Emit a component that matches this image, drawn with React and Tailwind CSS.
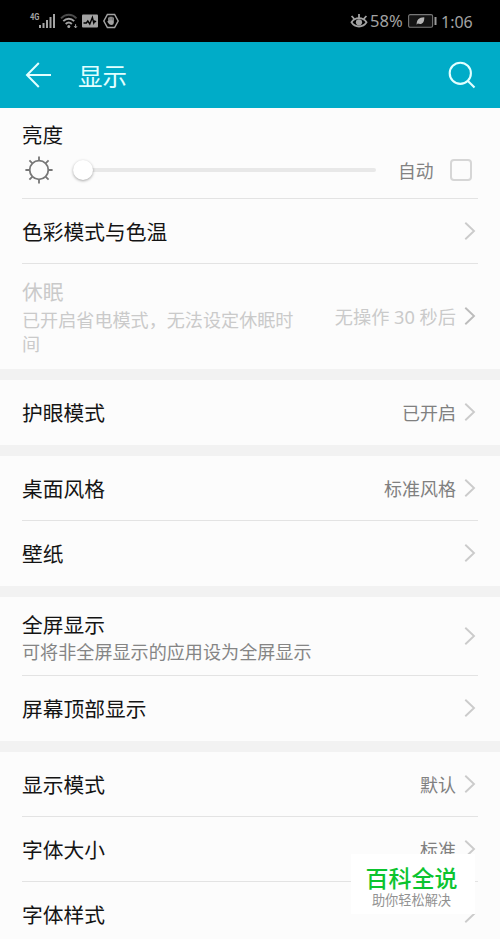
function StatusBar() {
  return (
    <div className="h-[42px] bg-black flex items-center justify-between pl-[29px] pr-[27px] text-[#a3a3a3]">
      <div className="flex items-center">
        <svg width="27" height="18" viewBox="0 0 27 18" fill="currentColor">
          <text
            x="1"
            y="8"
            fontSize="9.5"
            fontWeight="700"
            fontFamily="Roboto, sans-serif"
            textLength="9.5"
            lengthAdjust="spacingAndGlyphs"
          >
            4G
          </text>
          <rect x="10" y="13" width="2" height="3" />
          <rect x="13.5" y="11" width="2" height="5" />
          <rect x="17" y="8" width="2" height="8" />
          <rect x="20.5" y="5" width="2" height="11" />
          <rect x="24" y="2" width="2" height="14" />
        </svg>
        <svg className="ml-1" width="19" height="18" viewBox="0 0 19 18" fill="none" stroke="currentColor" strokeWidth="1.9">
          <path d="M1 6.3C5.5 1.6 12 1.6 16.5 6.3" stroke="#4a4a4a" />
          <path d="M3.3 9.2C6.5 6 11 6 14.2 9.2" />
          <path d="M5.7 12C7.6 10.2 9.9 10.2 11.8 12" />
          <circle cx="8.8" cy="14.4" r="1.5" fill="currentColor" stroke="none" />
          <path d="M15.6 12.2v3.6M14.2 14.2l1.4 1.7 1.4-1.7" strokeWidth="1" />
        </svg>
        <svg className="ml-[3px]" width="16" height="14" viewBox="0 0 16 14">
          <rect width="16" height="13" y="0.5" rx="1" fill="currentColor" />
          <path d="M1.5 9h2.8l1.5-2 2 3 2.6-6.5 1.4 5.5 1-2 1.2 1" fill="none" stroke="#000" strokeWidth="1.4" />
        </svg>
        <svg className="ml-[5px]" width="16" height="16" viewBox="0 0 16 16">
          <path d="M4.4 1.5h7.2L15.2 8l-3.6 6.5H4.4L.8 8z" fill="none" stroke="currentColor" strokeWidth="1.5" />
          <path d="M5.2 4.6h1.2v-.8h3.2v.8h1.2v5.2q0 2.2-2.6 2.2-1.8 0-2.6-1.4L4.2 8.4l1-.4z" fill="currentColor" />
          <path d="M6.8 4.4v3M8.1 4v3.4M9.5 4.4v3" stroke="#333" strokeWidth=".4" />
        </svg>
      </div>
      <div className="flex items-center font-['Noto_Sans'] text-[16.5px]">
        <svg width="18" height="16" viewBox="0 0 18 16" fill="none" stroke="currentColor" strokeWidth="1.8">
          <path d="M1.5 9.3C5 3.7 13 3.7 16.5 9.3C13 14.9 5 14.9 1.5 9.3z" />
          <circle cx="9" cy="9.3" r="3.1" fill="currentColor" stroke="none" />
          <path d="M9 5V1M4.3 6L1.6 3M13.7 6l2.7-3" />
        </svg>
        <span className="ml-[2px] w-[34px] pt-px whitespace-nowrap">58%</span>
        <svg className="ml-[4px]" width="29" height="14" viewBox="0 0 29 14">
          <rect x=".6" y=".6" width="24" height="12.6" rx="1.5" fill="#141414" stroke="#777" strokeWidth="1.1" />
          <rect x="26.5" y="3" width="2" height="8" fill="#999" />
          <path d="M8.6 10.8C8.8 6 10.5 3.6 16.3 3.3C16.5 8.5 14 11.2 9.8 9.6z" fill="#b5b5b5" />
        </svg>
        <span className="ml-[4px] w-[32px] pt-px whitespace-nowrap text-[16px]">1:06</span>
      </div>
    </div>
  );
}

function Header() {
  return (
    <div className="h-[66px] bg-[#00acc8] flex items-center text-[#e2ffff] pl-[25px] pr-6">
      <svg width="27" height="26" viewBox="0 0 27 26" fill="none" stroke="currentColor" strokeWidth="2">
        <path d="M13.8 1L2 13l11.8 12M2.3 13H26" />
      </svg>
      <h1 className="ml-[26px] pt-[3px] flex-1 text-[24.5px] leading-[30px]">显示</h1>
      <svg width="28" height="28" viewBox="0 0 28 28" fill="none" stroke="currentColor" strokeWidth="2.1">
        <circle cx="12.3" cy="12.3" r="10.6" />
        <path d="M19.7 19.7l6.8 6.8" />
      </svg>
    </div>
  );
}

function Chevron({ dark }) {
  return (
    <svg
      className={dark ? "ml-2 shrink-0 text-[#bcbcbc]" : "ml-2 shrink-0 text-[#cbcbcb]"}
      width="12"
      height="19"
      viewBox="0 0 12 19"
      fill="none"
      stroke="currentColor"
      strokeWidth="1.9"
    >
      <path d="M1.3 .8L10 9l-8.7 8.2" />
    </svg>
  );
}

function Brightness() {
  return (
    <div className="h-[90px] px-[22px] pt-[13px]">
      <div className="text-[20.6px] leading-[28px] text-[#141414]">亮度</div>
      <div className="flex items-center h-[42px]">
        <svg className="ml-[3px]" width="28" height="28" viewBox="0 0 28 28" fill="none" stroke="#777" strokeWidth="1.8">
          <circle cx="14" cy="14" r="9.3" />
          <path d="M14 .4v4M14 23.6v4M.4 14h4M23.6 14h4M4.4 4.4l2.8 2.8M20.8 20.8l2.8 2.8M4.4 23.6l2.8-2.8M20.8 7.2l2.8-2.8" />
        </svg>
        <div className="ml-5 w-[303px] h-[4px] rounded-full bg-[#e8e8e8] flex items-center">
          <div className="w-[20px] h-[20px] shrink-0 rounded-full bg-white shadow-[0_1px_3px_rgba(0,0,0,0.35)]" />
        </div>
        <span className="ml-[22px] w-[36px] pt-0.5 text-[17.8px] text-[#828282]">自动</span>
        <div className="ml-[16px] w-[22px] h-[22px] rounded-[4px] border-2 border-[#d6d6d6]" />
      </div>
    </div>
  );
}

function Row({ title, desc, value, disabled, height = "h-16" }) {
  return (
    <div className={`${height} flex items-center pl-[22px] pr-6`}>
      <div className={disabled ? "w-[276px] text-[#cacaca]" : "pt-0.5 text-[#141414]"}>
        <div className="text-[20.75px] leading-[29px]">{title}</div>
        {desc && (
          <div className={disabled ? "pt-px text-[18.1px] leading-6" : "text-[18.1px] leading-6 text-[#858585]"}>
            {desc}
          </div>
        )}
      </div>
      <div className="flex-1 flex items-center justify-end whitespace-nowrap">
        {value && (
          <span className={disabled ? "pt-0.5 text-[18.2px] text-[#cacaca]" : "pt-0.5 text-[18px] text-[#808080]"}>
            {value}
          </span>
        )}
        <Chevron dark={disabled} />
      </div>
    </div>
  );
}

function Divider() {
  return <div className="mx-[22px] h-px bg-[#e3e3e3]" />;
}

function Gap() {
  return <div className="h-[11px] bg-[#f2f2f2]" />;
}

function Watermark() {
  return (
    <div className="absolute left-[351px] top-[854px] w-[124px] h-[60px] bg-white flex flex-col items-center pt-[9px] pr-[3px]">
      <div className="text-[23px] leading-[30px] font-medium text-[#0cc42f]">百科全说</div>
      <div className="text-[13.2px] leading-[15px] text-[#929292]">助你轻松解决</div>
    </div>
  );
}

export default function App() {
  return (
    <div className="relative w-[500px] h-[939px] overflow-hidden bg-[#fcfcfc] font-['Noto_Sans','Noto_Sans_CJK_SC',sans-serif]">
      <StatusBar />
      <Header />
      <Brightness />
      <Divider />
      <Row title="色彩模式与色温" />
      <Divider />
      <Row
        title="休眠"
        desc="已开启省电模式，无法设定休眠时间"
        value="无操作 30 秒后"
        height="h-[105px]"
        disabled
      />
      <Gap />
      <Row title="护眼模式" value="已开启" height="h-[65px]" />
      <Gap />
      <Row title="桌面风格" value="标准风格" />
      <Divider />
      <Row title="壁纸" height="h-[65px]" />
      <Gap />
      <Row title="全屏显示" desc="可将非全屏显示的应用设为全屏显示" height="h-[78px]" />
      <Divider />
      <Row title="屏幕顶部显示" height="h-[65px]" />
      <Gap />
      <Row title="显示模式" value="默认" />
      <Divider />
      <Row title="字体大小" value="标准" />
      <Divider />
      <Row title="字体样式" />
      <Watermark />
    </div>
  );
}
